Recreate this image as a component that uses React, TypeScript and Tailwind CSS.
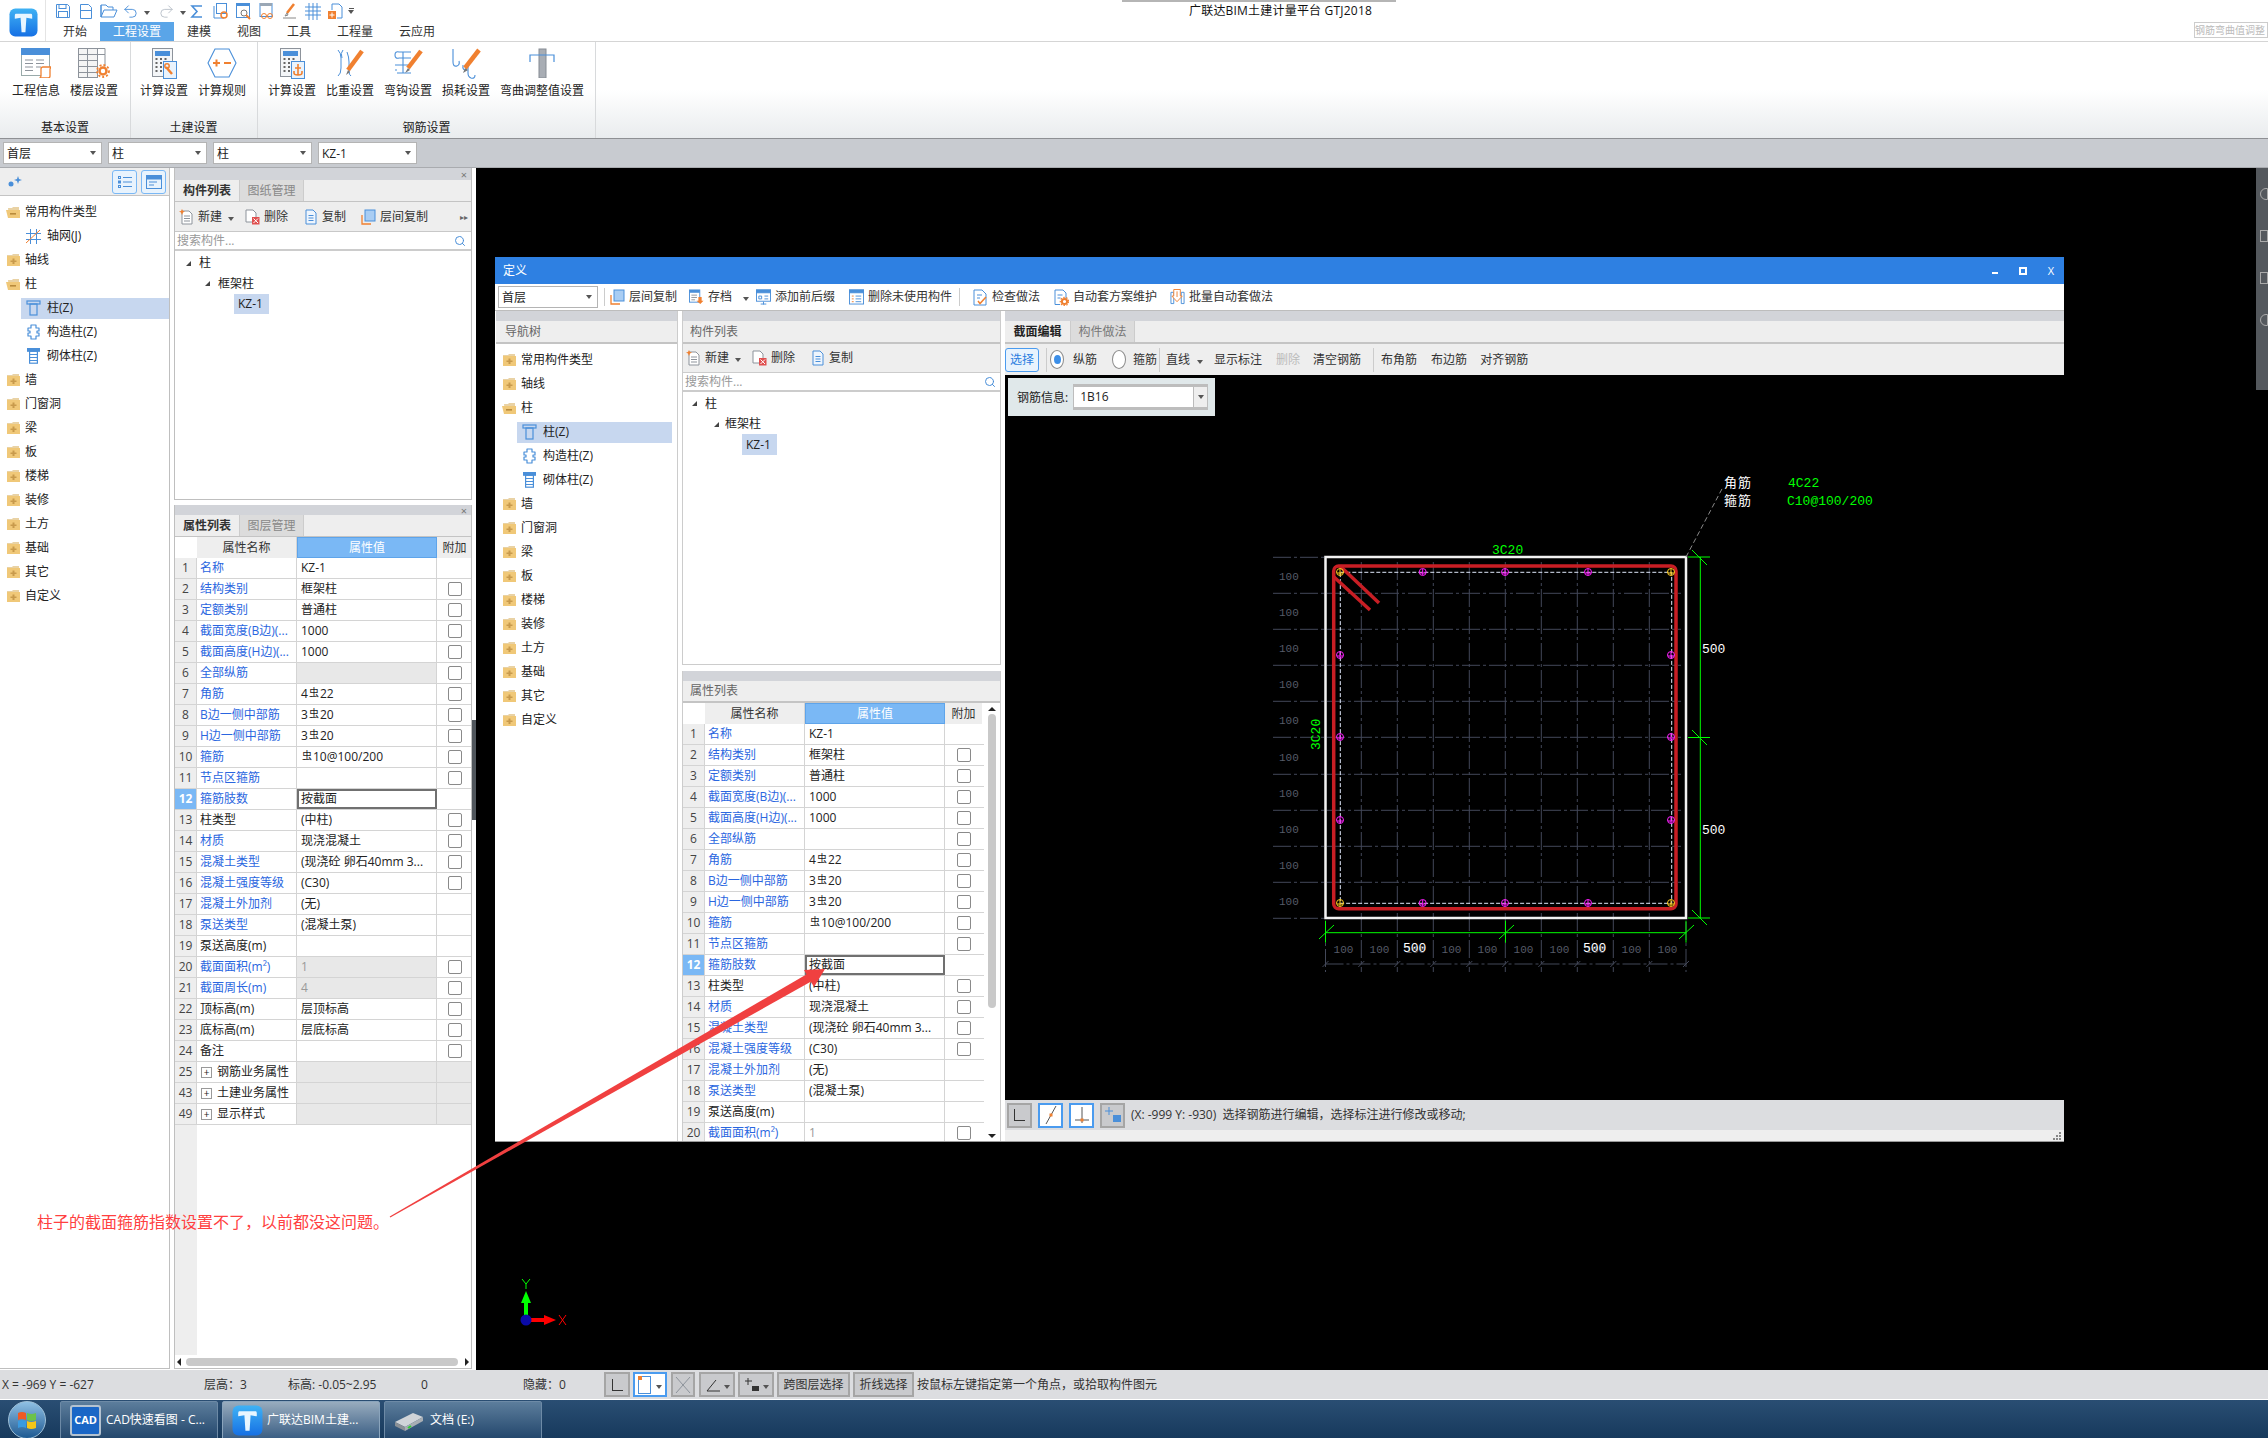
import React from "react";
import { Undo2, Redo2, Search } from "lucide-react";

const B = "#4a8fd9";
const O = "#f08030";
const G = "#8d939b";

const Caret = () => <span className="inline-block w-0 h-0 border-x-[3px] border-x-transparent border-t-[4px] border-t-[#555]" />;

const Logo = ({ s = 29 }: { s?: number }) => (
  <svg width={s} height={s} viewBox="0 0 30 30">
    <defs>
      <linearGradient id="lg" x1="0" y1="0" x2="0" y2="1">
        <stop offset="0" stopColor="#3fb2f4" />
        <stop offset="1" stopColor="#1670e4" />
      </linearGradient>
    </defs>
    <rect x="0.5" y="0.5" width="29" height="29" rx="6" fill="url(#lg)" />
    <path d="M7 6h16q1 0 1 2v3l-6-1-1 15-4 0-1-15-6 1V8q0-2 1-2z" fill="#e8f6ff" />
  </svg>
);

const Folder = ({ open }: { open?: boolean }) => (
  <svg width="15" height="14" viewBox="0 0 15 14">
    {open ? (
      <>
        <path d="M2 3h4l1-1h6v11H3z" fill="#e9d2a4" />
        <path d="M0 5h13l1 0v8H2z" fill="#f0c878" />
        <rect x="4" y="8" width="6" height="1.6" fill="#b98b3c" />
      </>
    ) : (
      <>
        <path d="M1 2h5l1-1h6v2H1z" fill="#e9d2a4" />
        <rect x="1" y="3" width="13" height="10" fill="#f0c878" />
        <path d="M6.5 5.5h2v2h2v1.5h-2v2h-2V9h-2V7.5h2z" fill="#c89a4c" />
      </>
    )}
  </svg>
);

const IcoGrid = () => (
  <svg width="15" height="15" viewBox="0 0 15 15" fill="none" stroke={B} strokeWidth="1">
    <path d="M4.5 0v15M10.5 0v15M0 4.5h15M0 10.5h15" />
    <path d="M0 14L14 1" stroke={O} />
  </svg>
);
const IcoCol = () => (
  <svg width="15" height="16" viewBox="0 0 15 16" fill="none" stroke={B} strokeWidth="1.2">
    <rect x="1" y="1" width="13" height="3" />
    <rect x="4" y="4" width="7" height="11" />
  </svg>
);
const IcoGz = () => (
  <svg width="13" height="16" viewBox="0 0 13 16" fill="none" stroke={B} strokeWidth="1.2">
    <path d="M4 1h5v3h3v3h-2v2h2v3H9v3H4v-3H1V9h2V7H1V4h3z" strokeLinejoin="round" />
  </svg>
);
const IcoQt = () => (
  <svg width="13" height="16" viewBox="0 0 13 16" fill="none" stroke={B} strokeWidth="1.2">
    <rect x="0.6" y="0.6" width="11.8" height="2.6" fill={B} />
    <rect x="2.6" y="3.2" width="7.8" height="12" />
    <path d="M2.6 6.5h7.8M2.6 9.5h7.8M2.6 12.5h7.8" />
  </svg>
);

type NavItem = { t: string; kind: "open" | "closed" | "grid" | "col" | "gz" | "qt"; sel?: boolean };
const mainNav: NavItem[] = [
  { t: "常用构件类型", kind: "open" },
  { t: "轴网(J)", kind: "grid" },
  { t: "轴线", kind: "closed" },
  { t: "柱", kind: "open" },
  { t: "柱(Z)", kind: "col", sel: true },
  { t: "构造柱(Z)", kind: "gz" },
  { t: "砌体柱(Z)", kind: "qt" },
  ...["墙", "门窗洞", "梁", "板", "楼梯", "装修", "土方", "基础", "其它", "自定义"].map((t) => ({ t, kind: "closed" as const })),
];
const dlgNav: NavItem[] = [{ t: "常用构件类型", kind: "closed" }, ...mainNav.slice(2)];

const NavTree = ({ items, dlg }: { items: NavItem[]; dlg?: boolean }) => (
  <div className="flex flex-col pt-[4px]">
    {items.map((it) => {
      const folder = it.kind === "open" || it.kind === "closed";
      return (
        <div key={it.t} className={folder ? "h-[24px] flex items-center pl-[6px]" : dlg ? "h-[24px] flex items-center pl-[21px] pr-[5px]" : "h-[24px] flex items-center pl-[21px]"}>
          {folder ? (
            <>
              <Folder open={it.kind === "open"} />
              <span className="ml-[4px] text-[#222]">{it.t}</span>
            </>
          ) : (
            <div className={it.sel ? "flex-1 h-[21px] flex items-center pl-[4px] bg-[#c7d7ef]" : "flex-1 h-[21px] flex items-center pl-[4px]"}>
              <span className="w-[16px] h-[16px] flex items-center justify-center">
                {it.kind === "grid" && <IcoGrid />}
                {it.kind === "col" && <IcoCol />}
                {it.kind === "gz" && <IcoGz />}
                {it.kind === "qt" && <IcoQt />}
              </span>
              <span className="ml-[6px] text-[#222]">{it.t}</span>
            </div>
          )}
        </div>
      );
    })}
  </div>
);

const Combo = ({ t, w }: { t: string; w: string }) => (
  <div className={`${w} h-[22px] bg-white border border-[#b4b4b4] flex items-center justify-between pl-[3px] pr-[5px] text-[#222]`}>
    <span className="pt-[1px]">{t}</span>
    <Caret />
  </div>
);

const IcoNew = () => (
  <svg width="15" height="16" viewBox="0 0 15 16" fill="none">
    <path d="M3 2h7l3 3v10H3z" fill="#fff" stroke={G} />
    <path d="M5 7h6M5 9.500h6M5 12h6" stroke={G} />
    <path d="M3 0l1 2 2 .5-2 1L3 6 2 3.500 0 2.500 2 2z" fill={O} />
  </svg>
);
const IcoDel = () => (
  <svg width="15" height="16" viewBox="0 0 15 16" fill="none">
    <path d="M1 1h7l3 3v9H1z" fill="#fff" stroke={G} />
    <rect x="7" y="8" width="7.500" height="7.500" fill="#e05050" />
    <path d="M8.500 9.500l4.500 4.500M13 9.500l-4.500 4.500" stroke="#fff" />
  </svg>
);
const IcoCopy = () => (
  <svg width="14" height="16" viewBox="0 0 14 16" fill="none" stroke={B}>
    <path d="M2 1h7l3 3v11H2z" fill="#eef5fd" />
    <path d="M4.500 6.500h5M4.500 9h5M4.500 11.500h5" />
  </svg>
);
const IcoLayer = () => (
  <svg width="15" height="16" viewBox="0 0 15 16" fill="none">
    <path d="M1 6v9h9" stroke={O} strokeWidth="1.300" />
    <rect x="4" y="1" width="10" height="11" fill="#a9cdf3" stroke={B} />
  </svg>
);
const IcoStore = () => (
  <svg width="16" height="16" viewBox="0 0 16 16" fill="none">
    <rect x="0.500" y="0.500" width="11" height="13" fill="#fff" stroke={B} />
    <rect x="0.500" y="0.500" width="11" height="3" fill={B} />
    <path d="M2.500 6h6M2.500 8.500h6M2.500 11h4" stroke={G} />
    <path d="M10 8v4H8l4 3.500 3.500-3.500h-2V8z" fill={O} />
  </svg>
);
const IcoPrefix = () => (
  <svg width="16" height="16" viewBox="0 0 16 16" fill="none" stroke={B}>
    <rect x="0.500" y="0.500" width="15" height="12" />
    <rect x="0.500" y="0.500" width="15" height="3" fill={B} />
    <path d="M3 7h3v3H3zM9 7h4M9 10h4M8 13v3M5 15.500h6" />
  </svg>
);
const IcoUnused = () => (
  <svg width="16" height="16" viewBox="0 0 16 16" fill="none" stroke={B}>
    <rect x="0.500" y="0.500" width="15" height="15" />
    <rect x="0.500" y="0.500" width="15" height="3" fill={B} />
    <path d="M3 7h2M3 10h2M3 13h2" stroke={O} />
    <path d="M7 7h6M7 10h6M7 13h6" />
  </svg>
);
const IcoCheck = () => (
  <svg width="15" height="17" viewBox="0 0 15 17" fill="none">
    <path d="M1 1h8l4 4v11H1z" stroke={B} fill="#fff" />
    <path d="M4 6h5M4 9h3" stroke={B} />
    <path d="M5 12l2 2.500L13 8" stroke={O} strokeWidth="1.500" />
  </svg>
);
const IcoAuto = () => (
  <svg width="15" height="17" viewBox="0 0 15 17" fill="none">
    <path d="M1 1h8l3 3v7M6 15.500H1V1" stroke={B} fill="#fff" />
    <path d="M3.500 6h5M3.500 9h3" stroke={B} />
    <circle cx="10.500" cy="12.500" r="2.600" stroke={O} strokeWidth="2" />
    <circle cx="10.500" cy="12.500" r="4.200" stroke={O} strokeDasharray="1.500 1.500" strokeWidth="1.200" />
  </svg>
);
const IcoBatch = () => (
  <svg width="16" height="18" viewBox="0 0 16 18" fill="none">
    <path d="M1 4h3v12H1zM12 4h3v12h-3z" stroke={B} />
    <path d="M4 1h7v7h2l-5.500 6L2 8h2z" fill="#fff" stroke={O} />
    <path d="M7.500 3v6" stroke={O} />
  </svg>
);

const ToolText = ({ icon, t, cls, sp }: { icon: React.ReactNode; t: string; cls: string; sp?: string }) => (
  <div className={`flex items-center ${cls}`}>
    <span className={sp || "w-[15px] flex justify-center"}>{icon}</span>
    <span className="ml-[4px] text-[#333]">{t}</span>
  </div>
);

const Val = ({ v }: { v: string }) => {
  const parts = v.split("虫");
  if (parts.length === 1) return <span>{v}</span>;
  return (
    <span>
      {parts[0]}
      <span className="inline-block text-[10px] leading-[10px] -translate-y-[2px] mx-[1px]">虫</span>
      {parts[1]}
    </span>
  );
};

type R = { n: number; name: string; val: string; blue?: boolean; noCk?: boolean; gray?: boolean; dim?: boolean; exp?: boolean };
const rows: R[] = [
  { n: 1, name: "名称", val: "KZ-1", blue: true, noCk: true },
  { n: 2, name: "结构类别", val: "框架柱", blue: true },
  { n: 3, name: "定额类别", val: "普通柱", blue: true },
  { n: 4, name: "截面宽度(B边)(...", val: "1000", blue: true },
  { n: 5, name: "截面高度(H边)(...", val: "1000", blue: true },
  { n: 6, name: "全部纵筋", val: "", blue: true, gray: true },
  { n: 7, name: "角筋", val: "4虫22", blue: true },
  { n: 8, name: "B边一侧中部筋", val: "3虫20", blue: true },
  { n: 9, name: "H边一侧中部筋", val: "3虫20", blue: true },
  { n: 10, name: "箍筋", val: "虫10@100/200", blue: true },
  { n: 11, name: "节点区箍筋", val: "", blue: true },
  { n: 12, name: "箍筋肢数", val: "按截面", blue: true, noCk: true },
  { n: 13, name: "柱类型", val: "(中柱)" },
  { n: 14, name: "材质", val: "现浇混凝土", blue: true },
  { n: 15, name: "混凝土类型", val: "(现浇砼 卵石40mm 3...", blue: true },
  { n: 16, name: "混凝土强度等级", val: "(C30)", blue: true },
  { n: 17, name: "混凝土外加剂", val: "(无)", blue: true, noCk: true },
  { n: 18, name: "泵送类型", val: "(混凝土泵)", blue: true, noCk: true },
  { n: 19, name: "泵送高度(m)", val: "", noCk: true },
  { n: 20, name: "截面面积(m²)", val: "1", blue: true, gray: true, dim: true },
  { n: 21, name: "截面周长(m)", val: "4", blue: true, gray: true, dim: true },
  { n: 22, name: "顶标高(m)", val: "层顶标高" },
  { n: 23, name: "底标高(m)", val: "层底标高" },
  { n: 24, name: "备注", val: "" },
  { n: 25, name: "钢筋业务属性", val: "", noCk: true, gray: true, exp: true },
  { n: 43, name: "土建业务属性", val: "", noCk: true, gray: true, exp: true },
  { n: 49, name: "显示样式", val: "", noCk: true, gray: true, exp: true },
];

const PropTable = ({ dlg }: { dlg?: boolean }) => {
  const addW = dlg ? "w-[37px]" : "w-[34px] pl-[1px]";
  const data = dlg ? rows.slice(0, 20) : rows;
  return (
    <div className="flex flex-col">
      <div className="h-[21px] flex items-stretch">
        <div className="w-[22px] bg-white" />
        <div className="w-[100px] bg-[#eeeeee] flex items-center justify-center text-[#333] border-r border-[#d4d4d4]">属性名称</div>
        <div className="w-[140px] bg-[#7ab8f5] flex items-center justify-center text-white border border-[#5ea4ea]">属性值</div>
        <div className={`${addW} bg-[#eeeeee] flex items-center justify-center text-[#333]`}>附加</div>
      </div>
      {data.map((r) => (
        <div key={r.n} className="h-[21px] flex items-stretch border-b border-[#d4d4d4] bg-white">
          <div className={r.n === 12 ? "w-[22px] bg-[#7ab8f5] text-white font-bold flex items-center justify-center border-r border-[#d4d4d4]" : "w-[22px] bg-[#eeeeee] text-[#444] flex items-center justify-center border-r border-[#d4d4d4]"}>
            {r.n}
          </div>
          <div className={r.blue ? "w-[100px] pl-[3px] flex items-center text-[#2a66e0] border-r border-[#d4d4d4] whitespace-nowrap overflow-hidden" : "w-[100px] pl-[3px] flex items-center text-[#222] border-r border-[#d4d4d4] whitespace-nowrap overflow-hidden"}>
            {r.exp && <span className="w-[11px] h-[11px] border border-[#999] flex items-center justify-center text-[10px] leading-none mr-[5px] ml-[1px] bg-white">+</span>}
            {r.name}
          </div>
          <div
            className={
              r.n === 12
                ? "w-[140px] pl-[2px] flex items-center border-2 border-[#707070] text-[#222] whitespace-nowrap"
                : r.gray && !dlg
                ? "w-[140px] pl-[4px] flex items-center bg-[#e8e8e8] text-[#999] border-r border-[#d4d4d4] whitespace-nowrap"
                : r.dim
                ? "w-[140px] pl-[4px] flex items-center text-[#999] border-r border-[#d4d4d4] whitespace-nowrap"
                : "w-[140px] pl-[4px] flex items-center text-[#222] border-r border-[#d4d4d4] whitespace-nowrap"
            }
          >
            <Val v={r.val} />
          </div>
          <div className={r.exp ? `${addW} flex items-center justify-center bg-[#e8e8e8]` : `${addW} flex items-center justify-center`}>
            {!r.noCk && <span className="w-[14px] h-[14px] border border-[#8a8a8a] rounded-[2px] bg-white" />}
          </div>
        </div>
      ))}
    </div>
  );
};

const Check = ({ on }: { on?: boolean }) => (
  <span className="w-[14px] h-[19px] rounded-[50%] border border-[#8a8a8a] flex items-center justify-center bg-white">
    {on && <span className="w-[7px] h-[9px] rounded-[50%] bg-[#3d8fe8]" />}
  </span>
);

/* ---------- CAD drawing ---------- */
const vx = [1360.3, 1396.3, 1432.3, 1468.3, 1504.3, 1540.3, 1576.3, 1612.3, 1648.3];
const hy = [593.3, 629.3, 665.3, 701.3, 737.3, 774.3, 810.3, 846.3, 882.3];
const labY = [575.7, 611.7, 647.7, 683.7, 719.7, 756.7, 792.7, 828.7, 864.7, 900.7];
const labX = [1342.6, 1378.6, 1414.6, 1450.6, 1486.6, 1522.6, 1558.6, 1594.6, 1630.6, 1666.6];

const Bar = ({ x, y, c }: { x: number; y: number; c: string }) => (
  <g stroke={c} strokeWidth="1" fill="none">
    <circle cx={x} cy={y} r="3.500" />
    <path d={`M${x} ${y - 3}v6M${x - 3} ${y + 1}h6`} />
  </g>
);

const Drawing = () => (
  <svg className="absolute inset-0" width="1060" height="725" viewBox="1004 375 1060 725">
    <g stroke="#434859" strokeWidth="1" strokeDasharray="18 3 3 3" fill="none">
      {vx.map((x) => (
        <path key={x} d={`M${x} 562V972`} />
      ))}
      {hy.map((y) => (
        <path key={y} d={`M1272 ${y}H1680`} />
      ))}
      <path d="M1272 557.300H1324M1272 918.300H1324" />
      <path d="M1324.500 922V972M1685 922V972M1324.500 964H1685" />
    </g>
    <g stroke="#434859" strokeWidth="1">
      {[1324.5, ...vx, 1685].map((x) => (
        <path key={x} d={`M${x - 3} 967l6-6`} />
      ))}
    </g>
    <g fontFamily="Liberation Mono, monospace" fontSize="11" fill="#565b68">
      {labY.map((y) => (
        <text key={y} x="1278" y={y + 4}>100</text>
      ))}
      {labX.map((x) => (
        <text key={x} x={x - 10} y="953">100</text>
      ))}
    </g>
    <rect x="1324.500" y="557" width="360.500" height="361" fill="none" stroke="#f2f2f2" strokeWidth="2.500" />
    <rect x="1339.300" y="572.300" width="331.400" height="331" fill="none" stroke="#dfe8fa" strokeWidth="1" strokeDasharray="4 2" />
    <rect x="1332.700" y="566" width="342.300" height="342.700" rx="5" fill="none" stroke="#c81e24" strokeWidth="3.500" />
    <path d="M1339 566L1378 603M1333 577L1369 610" stroke="#c81e24" strokeWidth="3.500" fill="none" />
    {[1421.7, 1504, 1587].map((x) => (
      <React.Fragment key={x}>
        <Bar x={x} y={572} c="#ff20ff" />
        <Bar x={x} y={903} c="#ff20ff" />
      </React.Fragment>
    ))}
    {[655, 737, 820].map((y) => (
      <React.Fragment key={y}>
        <Bar x={1339} y={y} c="#ff20ff" />
        <Bar x={1670} y={y} c="#ff20ff" />
      </React.Fragment>
    ))}
    <Bar x={1339} y={572} c="#ffcc20" />
    <Bar x={1670} y={572} c="#ffcc20" />
    <Bar x={1339} y={903} c="#ffcc20" />
    <Bar x={1670} y={903} c="#ffcc20" />
    <g stroke="#00ff00" strokeWidth="1" fill="none">
      <path d="M1324.500 932.700H1685M1324.500 920.700V942.700M1504.500 920.700V942.700M1685 920.700V942.700" />
      <path d="M1318 939l15-14M1498 939l15-14M1678 939l15-14" />
      <path d="M1699.300 557V918M1687 557H1709M1687 737.500H1709M1687 918H1709" />
      <path d="M1691 550l15 15M1691 730l15 15M1691 910l15 15" />
    </g>
    <path d="M1685 557L1722 487" stroke="#8a8a8a" strokeDasharray="5 3" fill="none" />
    <g fontFamily="Liberation Mono, monospace" fontSize="13" fill="#ffffff">
      <text x="1402" y="952">500</text>
      <text x="1582" y="952">500</text>
      <text x="1701" y="653">500</text>
      <text x="1701" y="834">500</text>
    </g>
    <g fontFamily="Liberation Mono, monospace" fontSize="13" fill="#00ff00">
      <text x="1491" y="554">3C20</text>
      <text transform="translate(1319 750) rotate(-90)">3C20</text>
      <text x="1787" y="487">4C22</text>
      <text x="1786" y="505">C10@100/200</text>
    </g>
    <g fontFamily="Noto Sans CJK SC, sans-serif" fontSize="13" fill="#ffffff" letterSpacing="1">
      <text x="1723" y="487">角筋</text>
      <text x="1723" y="505">箍筋</text>
    </g>
  </svg>
);

const StatBtn = ({ children, w, on }: { children: React.ReactNode; w: string; on?: boolean }) => (
  <div className={on ? `${w} h-[25px] bg-white border-2 border-[#4a9bef] flex items-center justify-center` : `${w} h-[25px] bg-[#c9cacd] border-2 border-[#a5a5a5] flex items-center justify-center`}>
    {children}
  </div>
);

const Dialog = () => (
  <div className="absolute left-[495px] top-[257px] w-[1569px] h-[885px] flex flex-col bg-white border-b border-[#999]">
    <div className="h-[27px] bg-[#2e80e2] flex items-center pl-[8px] text-white">
      <span>定义</span>
      <div className="ml-auto flex items-center">
        <span className="w-[6px] h-[2px] mt-[5px] bg-white mr-[21px]" />
        <span className="w-[8px] h-[8px] border-2 border-white mr-[21px]" />
        <span className="mr-[10px] text-[11px] leading-none">X</span>
      </div>
    </div>
    <div className="h-[27px] bg-white border-b border-[#bdbdbd] flex items-center pl-[3px]">
      <Combo t="首层" w="w-[100px]" />
      <span className="w-px h-[18px] bg-[#ccc] ml-[6px]" />
      <ToolText cls="ml-[5px] w-[72px]" icon={<IcoLayer />} t="层间复制" />
      <ToolText cls="ml-[7px] w-[53px]" icon={<IcoStore />} t="存档" />
      <span className="ml-[1px]"><Caret /></span>
      <ToolText cls="ml-[7px] w-[85px]" icon={<IcoPrefix />} t="添加前后缀" />
      <ToolText cls="ml-[8px] w-[110px]" icon={<IcoUnused />} t="删除未使用构件" />
      <span className="w-px h-[18px] bg-[#ccc] ml-[0px]" />
      <ToolText cls="ml-[13px] w-[73px]" icon={<IcoCheck />} t="检查做法" />
      <ToolText cls="ml-[8px] w-[108px]" icon={<IcoAuto />} t="自动套方案维护" />
      <ToolText cls="ml-[8px] w-[110px]" icon={<IcoBatch />} t="批量自动套做法" />
    </div>
    <div className="flex-1 flex min-h-0">
      {/* nav */}
      <div className="w-[182px] ml-[1px] border-r border-[#ccc] flex flex-col">
        <div className="h-[10px] bg-[#d2d4d9]" />
        <div className="h-[23px] bg-[#eeeeee] border-b-2 border-[#c4c4c4] flex items-center pl-[9px] text-[#666]">导航树</div>
        <NavTree items={dlgNav} dlg />
      </div>
      <div className="w-[4px]" />
      {/* list column */}
      <div className="w-[319px] flex flex-col">
        <div className="h-[354px] flex flex-col border-x border-[#ccc] border-b">
          <div className="h-[10px] bg-[#d2d4d9]" />
          <div className="h-[23px] bg-[#eeeeee] border-b-2 border-[#c4c4c4] flex items-center pl-[7px] text-[#666]">构件列表</div>
          <div className="h-[28px] bg-[#eeeeee] flex items-center pl-[3px]">
            <ToolText cls="" icon={<IcoNew />} t="新建" />
            <span className="ml-[6px]"><Caret /></span>
            <ToolText cls="ml-[11px]" icon={<IcoDel />} t="删除" />
            <ToolText cls="ml-[15px]" icon={<IcoCopy />} t="复制" />
          </div>
          <div className="h-[20px] flex items-center pl-[2px] pr-[4px] bg-white border-b-2 border-t border-[#ccc] text-[#999]">
            <span>搜索构件...</span>
            <Search className="ml-auto" size={12} color={B} />
          </div>
          <div className="flex flex-col pt-[1px] text-[#222]">
            <div className="h-[21px] flex items-center pl-[9px]"><span className="w-0 h-0 border-b-[5px] border-l-[5px] border-b-[#444] border-l-transparent mr-[8px]" />柱</div>
            <div className="h-[20px] flex items-center pl-[31px]"><span className="w-0 h-0 border-b-[5px] border-l-[5px] border-b-[#444] border-l-transparent mr-[6px]" />框架柱</div>
            <div className="h-[21px] flex items-center pl-[59px]"><span className="h-[21px] w-[35px] bg-[#c7d7ef] flex items-center pl-[4px]">KZ-1</span></div>
          </div>
        </div>
        <div className="h-[6px]" />
        <div className="flex-1 flex flex-col min-h-0 border-x border-[#ccc] overflow-hidden">
          <div className="h-[10px] shrink-0 bg-[#d2d4d9]" />
          <div className="h-[22px] shrink-0 bg-[#eeeeee] border-b-2 border-[#c4c4c4] flex items-center pl-[7px] text-[#666]">属性列表</div>
          <div className="flex flex-1 min-h-0">
            <div className="w-[301px] overflow-hidden"><PropTable dlg /></div>
            <div className="w-[16px] flex flex-col items-center bg-white">
              <span className="mt-[4px] w-0 h-0 border-x-[4px] border-x-transparent border-b-[4px] border-b-[#222]" />
              <span className="mt-[3px] w-[8px] h-[294px] rounded-[4px] bg-[#c9c9c9]" />
              <span className="mt-auto mb-[3px] w-0 h-0 border-x-[4px] border-x-transparent border-t-[4px] border-t-[#222]" />
            </div>
          </div>
        </div>
      </div>
      <div className="w-[4px]" />
      {/* right */}
      <div className="w-[1059px] flex flex-col">
        <div className="h-[10px] bg-[#d2d4d9]" />
        <div className="h-[23px] bg-[#eeeeee] border-b-2 border-[#c4c4c4] flex items-stretch">
          <div className="w-[65px] flex items-center justify-center text-[#222] font-semibold">截面编辑</div>
          <div className="w-[65px] bg-[#dcdcdc] flex items-center justify-center text-[#777] border-x border-[#ccc]">构件做法</div>
        </div>
        <div className="h-[31px] bg-[#eeeeee] flex items-center text-[#333]">
          <div className="w-[34px] h-[24px] border border-[#4a9bef] rounded-[3px] bg-[#e8f3fd] text-[#2a7de0] flex items-center justify-center">选择</div>
          <span className="ml-[7px] w-px h-[24px] bg-[#ccc]" />
          <span className="ml-[3px]"><Check on /></span>
          <span className="ml-[9px]">纵筋</span>
          <span className="ml-[15px]"><Check /></span>
          <span className="ml-[7px]">箍筋</span>
          <span className="ml-[2px] w-px h-[24px] bg-[#ccc]" />
          <span className="ml-[6px]">直线</span>
          <span className="ml-[7px]"><Caret /></span>
          <span className="ml-[11px]">显示标注</span>
          <span className="ml-[14px] text-[#bbb]">删除</span>
          <span className="ml-[13px]">清空钢筋</span>
          <span className="ml-[12px] w-px h-[24px] bg-[#ccc]" />
          <span className="ml-[7px]">布角筋</span>
          <span className="ml-[14px]">布边筋</span>
          <span className="ml-[13px]">对齐钢筋</span>
        </div>
        <div className="flex-1 bg-black relative min-h-0">
          <Drawing />
          <div className="absolute left-[3px] top-[3px] w-[207px] h-[38px] bg-[#e0e8ea] flex items-center pl-[9px]">
            <span className="text-[#222] pt-[1px]">钢筋信息:</span>
            <div className="ml-[5px] w-[135px] h-[26px] bg-white border-y-[3px] border-x border-[#bdbdbd] flex items-center pl-[6px] text-[#222]">
              <span>1B16</span>
              <span className="ml-auto h-full w-[14px] bg-[#eee] border-l border-[#bbb] flex items-center justify-center"><Caret /></span>
            </div>
          </div>
        </div>
        <div className="h-[30px] bg-[#dcdde0] flex items-center pl-[2px] gap-[6px]">
          <StatBtn w="w-[25px]"><span className="w-[11px] h-[12px] border-l border-b border-[#333]" /></StatBtn>
          <StatBtn w="w-[25px]" on>
            <svg width="16" height="20" viewBox="0 0 16 20"><path d="M3 19L13 1" stroke="#555" /><rect x="6.500" y="8.500" width="3" height="3" fill={O} /></svg>
          </StatBtn>
          <StatBtn w="w-[25px]" on>
            <svg width="16" height="20" viewBox="0 0 16 20"><path d="M8 2v16M1 15h14" stroke="#555" /><rect x="6.500" y="13.500" width="3" height="3" fill={O} /></svg>
          </StatBtn>
          <StatBtn w="w-[25px]">
            <svg width="18" height="18" viewBox="0 0 18 18"><path d="M5 1v8M1 5h8" stroke={B} /><rect x="9" y="9" width="8" height="7" fill={B} /></svg>
          </StatBtn>
          <span className="text-[#333]">(X: -999 Y: -930)&nbsp;&nbsp;选择钢筋进行编辑，选择标注进行修改或移动;</span>
        </div>
        <div className="h-[11px] bg-[#eeeeee] flex justify-end items-end pr-[3px] pb-[1px]">
          <svg width="8" height="8" viewBox="0 0 8 8" fill="#888"><rect x="6" y="0" width="2" height="2" /><rect x="6" y="3" width="2" height="2" /><rect x="3" y="3" width="2" height="2" /><rect x="6" y="6" width="2" height="2" /><rect x="3" y="6" width="2" height="2" /><rect x="0" y="6" width="2" height="2" /></svg>
        </div>
      </div>
    </div>
  </div>
);

/* ---------- Ribbon icons ---------- */
const RI1 = () => (
  <svg width="30" height="30" viewBox="0 0 30 30" fill="none">
    <rect x="0.500" y="0.500" width="28" height="27" fill="#fff" stroke="#9aa" />
    <rect x="0" y="0" width="29" height="7" fill={B} />
    <path d="M4 12h8M4 15.500h8M4 19h8M4 22.500h8M15 12h8M15 15.500h8M15 19h5" stroke={G} />
    <path d="M22 19h8l-1 2v7q0 2-2 2h-8l1-2v-7q0-2 2-2z" fill="#fff" stroke={O} strokeWidth="1.300" />
  </svg>
);
const RI2 = () => (
  <svg width="32" height="30" viewBox="0 0 32 30" fill="none" stroke={G}>
    <rect x="0.500" y="0.500" width="19" height="29" fill="#f4f4f4" />
    <path d="M0 6.500h27v12M0 12.500h20M0 18.500h20M0 24.500h20M9.500 0v30" />
    <path d="M20 .5h7v6" />
    <circle cx="25" cy="23" r="3.500" stroke={O} strokeWidth="2.500" />
    <circle cx="25" cy="23" r="6" stroke={O} strokeWidth="1.800" strokeDasharray="2 2" />
  </svg>
);
const Calc = () => (
  <>
    <rect x="0.500" y="0.500" width="20" height="28" fill="#f4f6f8" stroke={G} />
    <rect x="3" y="3" width="15" height="5" fill={B} />
    <path d="M3.500 11h2M8 11h2M12.500 11h2M3.500 15h2M8 15h2M3.500 19h2M8 19h2M3.500 23h2M8 23h2" stroke="#666" strokeWidth="2" />
  </>
);
const RI3 = () => (
  <svg width="25" height="32" viewBox="0 0 25 32" fill="none">
    <Calc />
    <rect x="11.500" y="13.500" width="13" height="17" fill="#eaf3fc" stroke={B} />
    <path d="M14 19l6 7" stroke={O} strokeWidth="2.500" />
    <circle cx="15" cy="18" r="2.200" stroke={O} strokeWidth="1.500" />
  </svg>
);
const RI4 = () => (
  <svg width="30" height="30" viewBox="0 0 30 30" fill="none">
    <path d="M8 1h14l7 14-7 14H8L1 15z" stroke={B} strokeWidth="1.100" />
    <path d="M6 15h7M9.500 11.500v7M17 15h7" stroke={O} strokeWidth="2" />
  </svg>
);
const RI5 = () => (
  <svg width="25" height="32" viewBox="0 0 25 32" fill="none">
    <Calc />
    <rect x="11.500" y="13.500" width="13" height="17" fill="#eaf3fc" stroke={B} />
    <path d="M18 16v11M15 20h6M14 23v2q0 2 4 2t4-2v-2" stroke={O} strokeWidth="1.600" />
  </svg>
);
const Pencil = ({ d }: { d: string }) => <path d={d} stroke={O} strokeWidth="4.500" strokeLinecap="butt" />;
const RI6 = () => (
  <svg width="30" height="30" viewBox="0 0 30 30" fill="none">
    <path d="M3 2q3 3 3 8v10q0 6-3 8M8 2q-3 3-1 8M12 4q2 5 2 10v9q0 4 2 5" stroke={B} />
    <Pencil d="M27 3L13 22" />
    <path d="M13 22l-2 5 4-3z" fill="#777" />
  </svg>
);
const RI7 = () => (
  <svg width="30" height="30" viewBox="0 0 30 30" fill="none">
    <path d="M2 7q0-4 4-3h12M2 7q0 4 4 3h12M10 4v21M4 25h14M2 17h14M2 22h2" stroke={B} strokeWidth="1.100" />
    <Pencil d="M28 3L15 20" />
    <path d="M15 20l-3 5 5-3z" fill="#777" />
  </svg>
);
const RI8 = () => (
  <svg width="30" height="32" viewBox="0 0 30 32" fill="none">
    <path d="M2 1v13q0 5 4 4 3-1 2-5M12 17q-1 6 4 5M17 16v9q0 4 3 5 4 1 4-3" stroke={B} strokeWidth="1.100" />
    <Pencil d="M28 2L14 20" />
    <path d="M14 20l-2 5 5-3z" fill="#777" />
  </svg>
);
const RI9 = () => (
  <svg width="26" height="30" viewBox="0 0 26 30" fill="none">
    <rect x="10" y="1" width="7" height="29" fill="#a8adb4" stroke="#868c94" />
    <path d="M1 14V7h24v7" stroke={B} strokeWidth="1.200" />
  </svg>
);

const RBtn = ({ icon, t, w = "w-[48px]" }: { icon: React.ReactNode; t: string; w?: string }) => (
  <div className={`${w} flex flex-col items-center`}>
    <div className="h-[30px] flex items-start justify-center">{icon}</div>
    <span className="mt-[5px] leading-[16px] text-[#222] whitespace-nowrap">{t}</span>
  </div>
);

const RGroup = ({ w, pl, label, children }: { w: string; pl: string; label: string; children: React.ReactNode }) => (
  <div className={`${w} ${pl} h-full flex flex-col justify-between pt-[6px] pb-[2px] border-r border-[#d8dadc]`}>
    <div className="flex gap-[10px]">{children}</div>
    <div className="text-center leading-[16px] text-[#222]">{label}</div>
  </div>
);

const MiniNode = ({ c }: { c: React.ReactNode }) => <span className="flex items-center justify-center w-[23px] h-[17px]">{c}</span>;

const QuickIcon = ({ k }: { k: number }) => {
  if (k === 0)
    return (
      <svg width="16" height="16" viewBox="0 0 16 16" fill="none" stroke={B}>
        <path d="M1.500 1.500h11l2 2v11h-13z" />
        <rect x="4" y="1.500" width="7" height="4" />
        <rect x="3.500" y="8.500" width="9" height="6" />
      </svg>
    );
  if (k === 1)
    return (
      <svg width="16" height="17" viewBox="0 0 16 17" fill="none" stroke={B}>
        <path d="M2.500 1.500h8l3 3v11h-11z" />
        <path d="M2.500 7.500h11" />
      </svg>
    );
  if (k === 2)
    return (
      <svg width="18" height="16" viewBox="0 0 18 16" fill="none" stroke={B}>
        <path d="M1 2h5l2 2h5v3M1 2v12l3-7h13l-3 7H1z" />
      </svg>
    );
  if (k === 4)
    return (
      <svg width="15" height="15" viewBox="0 0 15 15" fill="none" stroke={B} strokeWidth="1.600">
        <path d="M12 2H2l5 5.500L2 13h10" />
      </svg>
    );
  if (k === 5)
    return (
      <svg width="16" height="17" viewBox="0 0 16 17" fill="none">
        <rect x="3.500" y="0.500" width="10" height="10" fill="#fff" stroke={B} />
        <path d="M1 3v12h10" stroke={B} />
        <circle cx="11" cy="12" r="3" stroke={O} strokeWidth="1.500" />
      </svg>
    );
  if (k === 6)
    return (
      <svg width="16" height="17" viewBox="0 0 16 17" fill="none">
        <rect x="0.500" y="0.500" width="13" height="14" stroke={B} />
        <rect x="0" y="0" width="14" height="3" fill={B} />
        <circle cx="8" cy="10" r="3" stroke="#777" />
        <path d="M10 12l4 4" stroke={O} strokeWidth="2" />
      </svg>
    );
  if (k === 7)
    return (
      <svg width="16" height="17" viewBox="0 0 16 17" fill="none">
        <rect x="1" y="0.500" width="12" height="13" stroke={B} />
        <rect x="1" y="0" width="12" height="3" fill="#9aa7b5" />
        <circle cx="5" cy="13" r="2.500" stroke={O} />
        <circle cx="11" cy="13" r="2.500" stroke={O} />
      </svg>
    );
  if (k === 8)
    return (
      <svg width="15" height="16" viewBox="0 0 15 16" fill="none">
        <path d="M12 1L5 10" stroke={O} strokeWidth="2.500" />
        <path d="M5 10l-2 3 3-1zM1 15h13" stroke="#888" />
      </svg>
    );
  if (k === 9)
    return (
      <svg width="16" height="17" viewBox="0 0 16 17" fill="none" stroke={B}>
        <path d="M4 0v17M8 0v17M12 0v17M0 4h16M0 8h16M0 12h16" />
      </svg>
    );
  return (
    <svg width="15" height="17" viewBox="0 0 15 17" fill="none">
      <path d="M4 7V1h7l3 3v11H9" stroke={B} />
      <rect x="0" y="8" width="8" height="8" fill={O} />
      <path d="M4 9.500v5M1.500 12h5" stroke="#fff" />
    </svg>
  );
};

export default function App() {
  return (
    <div className="relative w-[2268px] h-[1438px] overflow-hidden flex flex-col bg-white text-[12px] leading-[16px] [font-family:'Open_Sans','Noto_Sans_CJK_SC',sans-serif]">
      {/* top */}
      <div className="h-[42px] shrink-0 flex border-b border-[#d5d5d5] bg-white">
        <div className="w-[46px] pt-[8px] pl-[9px] border-r border-[#e4e4e4]">
          <Logo />
        </div>
        <div className="flex-1 flex flex-col">
          <div className="h-[22px] flex items-center pl-[5px] text-[#222]">
            <MiniNode c={<QuickIcon k={0} />} />
            <MiniNode c={<QuickIcon k={1} />} />
            <MiniNode c={<QuickIcon k={2} />} />
            <span className="ml-[2px]"><Undo2 size={17} color={B} strokeWidth={1.3} /></span>
            <span className="ml-[5px]"><Caret /></span>
            <span className="ml-[8px]"><Redo2 size={17} color="#b8c0c8" strokeWidth={1.3} /></span>
            <span className="ml-[5px]"><Caret /></span>
            <MiniNode c={<QuickIcon k={4} />} />
            <MiniNode c={<QuickIcon k={5} />} />
            <MiniNode c={<QuickIcon k={6} />} />
            <MiniNode c={<QuickIcon k={7} />} />
            <MiniNode c={<QuickIcon k={8} />} />
            <MiniNode c={<QuickIcon k={9} />} />
            <MiniNode c={<QuickIcon k={10} />} />
            <span className="ml-[1px] flex flex-col items-center gap-[1px]"><span className="w-[5px] h-px bg-[#555]" /><Caret /></span>
            <span className="ml-[835px] text-[#111] tracking-[0.2px]">广联达BIM土建计量平台 GTJ2018</span>
          </div>
          <div className="h-[19px] flex items-stretch pl-[4px] text-[#333]">
            <div className="w-[50px] flex items-center justify-center">开始</div>
            <div className="w-[74px] flex items-center justify-center bg-[#5aa5e8] text-white">工程设置</div>
            <div className="w-[50px] flex items-center justify-center">建模</div>
            <div className="w-[50px] flex items-center justify-center">视图</div>
            <div className="w-[50px] flex items-center justify-center">工具</div>
            <div className="w-[62px] flex items-center justify-center">工程量</div>
            <div className="w-[62px] flex items-center justify-center">云应用</div>
            <div className="ml-auto w-[74px] h-[16px] self-start border border-[#ccc] bg-white text-[#bbb] text-[10px] leading-[14px] whitespace-nowrap">钢筋弯曲值调整</div>
          </div>
        </div>
      </div>
      {/* ribbon */}
      <div className="h-[97px] shrink-0 flex border-b border-[#8e9094] bg-gradient-to-b from-white via-white to-[#e9ecee]">
        <RGroup w="w-[131px]" pl="pl-[12px] pr-[12px]" label="基本设置">
          <RBtn icon={<RI1 />} t="工程信息" />
          <RBtn icon={<RI2 />} t="楼层设置" />
        </RGroup>
        <RGroup w="w-[127px]" pl="pl-[9px] pr-[10px]" label="土建设置">
          <RBtn icon={<RI3 />} t="计算设置" />
          <RBtn icon={<RI4 />} t="计算规则" />
        </RGroup>
        <RGroup w="w-[338px]" pl="pl-[10px] pr-[10px]" label="钢筋设置">
          <RBtn icon={<RI5 />} t="计算设置" />
          <RBtn icon={<RI6 />} t="比重设置" />
          <RBtn icon={<RI7 />} t="弯钩设置" />
          <RBtn icon={<RI8 />} t="损耗设置" />
          <RBtn icon={<RI9 />} t="弯曲调整值设置" w="w-[84px]" />
        </RGroup>
      </div>
      {/* combos */}
      <div className="h-[29px] shrink-0 bg-[#c8cbd0] flex items-center pl-[3px] gap-[6px] border-b border-[#a9abaf]">
        <Combo t="首层" w="w-[99px]" />
        <Combo t="柱" w="w-[99px]" />
        <Combo t="柱" w="w-[99px]" />
        <Combo t="KZ-1" w="w-[99px]" />
      </div>
      {/* main */}
      <div className="h-[1202px] shrink-0 flex bg-white">
        <div className="w-[170px] h-[1201px] border-r border-b border-[#bfbfbf] flex flex-col">
          <div className="h-[28px] bg-[#eeeeee] border-b border-[#c4c4c4] flex items-center pl-[8px] pr-[3px]">
            <svg width="14" height="12" viewBox="0 0 14 12" fill={B}><path d="M10 0l1 3 3 1-3 1-1 3-1-3-3-1 3-1z" /><circle cx="3" cy="8" r="2.500" /></svg>
            <div className="ml-auto w-[25px] h-[24px] border border-[#7ab8f5] rounded-[3px] bg-[#e8f3fd] flex items-center justify-center">
              <svg width="16" height="14" viewBox="0 0 16 14" fill="none" stroke={B}><rect x="1.500" y="1.500" width="2" height="2" /><rect x="1.500" y="6" width="2" height="2" /><rect x="1.500" y="10.500" width="2" height="2" /><path d="M6 2.500h9M6 7h9M6 11.500h9" /></svg>
            </div>
            <div className="ml-[4px] w-[25px] h-[24px] border border-[#7ab8f5] rounded-[3px] bg-[#e8f3fd] flex items-center justify-center">
              <svg width="16" height="14" viewBox="0 0 16 14" fill="none" stroke={B}><rect x="0.500" y="0.500" width="15" height="13" /><rect x="0.500" y="0.500" width="15" height="3.500" fill={B} /><path d="M3 7h8M3 10h5" /></svg>
            </div>
          </div>
          <NavTree items={mainNav} />
        </div>
        <div className="w-[4px]" />
        <div className="w-[298px] flex flex-col h-[1201px]">
          <div className="h-[332px] border-x border-b border-[#bfbfbf] flex flex-col">
            <div className="h-[12px] bg-[#d2d4d9] flex items-center justify-end pr-[4px]"><span className="text-[11px] leading-none text-[#777]">×</span></div>
            <div className="h-[22px] bg-[#eeeeee] border-b border-[#c4c4c4] flex items-stretch">
              <div className="w-[64px] flex items-center justify-center font-semibold text-[#333]">构件列表</div>
              <div className="w-[65px] bg-[#dcdcdc] border-x border-[#ccc] flex items-center justify-center text-[#888]">图纸管理</div>
            </div>
            <div className="h-[30px] bg-[#eeeeee] border-b border-[#c8c8c8] flex items-center pl-[4px]">
              <ToolText cls="" icon={<IcoNew />} t="新建" />
              <span className="ml-[6px]"><Caret /></span>
              <ToolText cls="ml-[11px]" icon={<IcoDel />} t="删除" />
              <ToolText cls="ml-[15px]" icon={<IcoCopy />} t="复制" />
              <ToolText cls="ml-[15px]" icon={<IcoLayer />} t="层间复制" />
              <span className="ml-auto mr-[3px] text-[8px] leading-none text-[#666]">▸▸</span>
            </div>
            <div className="h-[19px] flex items-center pl-[2px] pr-[5px] border-b-2 border-[#ccc] text-[#999]">
              <span>搜索构件...</span>
              <Search className="ml-auto" size={12} color={B} />
            </div>
            <div className="flex flex-col pt-[2px] text-[#222]">
              <div className="h-[20px] flex items-center pl-[11px]"><span className="w-0 h-0 border-b-[5px] border-l-[5px] border-b-[#444] border-l-transparent mr-[8px]" />柱</div>
              <div className="h-[21px] flex items-center pl-[30px]"><span className="w-0 h-0 border-b-[5px] border-l-[5px] border-b-[#444] border-l-transparent mr-[8px]" />框架柱</div>
              <div className="h-[20px] flex items-center pl-[59px]"><span className="h-[20px] w-[35px] bg-[#c7d7ef] flex items-center pl-[4px]">KZ-1</span></div>
            </div>
          </div>
          <div className="h-[5px]" />
          <div className="flex-1 min-h-0 border-x border-b border-[#bfbfbf] flex flex-col">
            <div className="h-[10px] shrink-0 bg-[#d2d4d9] flex items-center justify-end pr-[4px]"><span className="text-[11px] leading-none text-[#777]">×</span></div>
            <div className="h-[22px] shrink-0 bg-[#eeeeee] border-b border-[#c4c4c4] flex items-stretch">
              <div className="w-[64px] flex items-center justify-center font-semibold text-[#333]">属性列表</div>
              <div className="w-[65px] bg-[#dcdcdc] border-x border-[#ccc] flex items-center justify-center text-[#888]">图层管理</div>
            </div>
            <PropTable />
            <div className="flex-1 min-h-0 w-[22px] bg-[#eeeeee]" />
            <div className="h-[13px] shrink-0 flex items-center px-[2px]">
              <span className="w-0 h-0 border-y-[4px] border-y-transparent border-r-[4px] border-r-[#222]" />
              <span className="ml-[5px] h-[8px] w-[272px] rounded-[4px] bg-[#c9c9c9]" />
              <span className="ml-auto w-0 h-0 border-y-[4px] border-y-transparent border-l-[4px] border-l-[#222]" />
            </div>
          </div>
        </div>
        <div className="w-[4px]" />
        <div className="flex-1 bg-black relative">
          <div className="absolute left-[-4px] top-[552px] w-[4px] h-[100px] bg-[#50565c]" />
          <div className="absolute right-0 top-0 w-[12px] h-[222px] bg-[#54585d] flex flex-col items-end gap-[30px] pt-[20px]">
            <span className="w-[8px] h-[12px] rounded-l-[6px] border border-[#aaa]" />
            <span className="w-[8px] h-[12px] border border-[#aaa]" />
            <span className="w-[8px] h-[12px] border border-[#aaa]" />
            <span className="w-[8px] h-[12px] rounded-l-[6px] border border-[#aaa]" />
          </div>
          <svg className="absolute left-[40px] top-[1105px]" width="60" height="60" viewBox="516 1273 60 60">
            <path d="M524 1300H528V1320H524z" fill="#00ff00" />
            <path d="M526 1291l5 12h-10z" fill="#00ff00" />
            <path d="M526 1318h20v4h-20z" fill="#ff0000" />
            <path d="M556 1320l-12 5v-10z" fill="#ff0000" />
            <circle cx="526" cy="1320" r="5.500" fill="#0a0aa8" />
            <path d="M522 1279l4 5 4-5M526 1284v5" stroke="#00ff00" fill="none" />
            <path d="M559 1315l7 10M566 1315l-7 10" stroke="#ff0000" fill="none" />
          </svg>
        </div>
      </div>
      {/* status */}
      <div className="h-[30px] shrink-0 bg-[#dcdde0] border-b border-white flex items-center pl-[2px] text-[#333]">
        <span className="w-[202px]">X = -969 Y = -627</span>
        <span className="w-[84px]">层高：3</span>
        <span className="w-[133px]">标高: -0.05~2.95</span>
        <span className="w-[102px]">0</span>
        <span className="w-[81px]">隐藏：0</span>
        <StatBtn w="w-[26px]"><span className="w-[11px] h-[12px] border-l border-b border-[#333]" /></StatBtn>
        <div className="ml-[3px]">
          <StatBtn w="w-[34px]" on>
            <svg width="13" height="18" viewBox="0 0 13 18" fill="none"><rect x="0.500" y="0.500" width="12" height="17" stroke={B} /><rect x="0" y="0" width="4" height="4" fill={O} /></svg>
            <span className="ml-[5px]"><Caret /></span>
          </StatBtn>
        </div>
        <div className="ml-[4px]">
          <StatBtn w="w-[24px]"><svg width="16" height="18" viewBox="0 0 16 18"><path d="M1 1l14 16M15 1L1 17" stroke="#8d939b" /></svg></StatBtn>
        </div>
        <div className="ml-[4px]">
          <StatBtn w="w-[36px]"><svg width="16" height="16" viewBox="0 0 16 16" fill="none"><path d="M2 14h13M2 14L11 3" stroke="#333" /></svg><span className="ml-[3px]"><Caret /></span></StatBtn>
        </div>
        <div className="ml-[3px]">
          <StatBtn w="w-[36px]"><svg width="16" height="16" viewBox="0 0 16 16" fill="none"><path d="M4 1v7M1 4h7" stroke="#333" /><rect x="8" y="9" width="7" height="5" fill="#333" /></svg><span className="ml-[3px]"><Caret /></span></StatBtn>
        </div>
        <div className="ml-[3px]"><StatBtn w="w-[73px]"><span>跨图层选择</span></StatBtn></div>
        <div className="ml-[3px]"><StatBtn w="w-[61px]"><span>折线选择</span></StatBtn></div>
        <span className="ml-[3px]">按鼠标左键指定第一个角点，或拾取构件图元</span>
      </div>
      {/* taskbar */}
      <div className="flex-1 bg-gradient-to-b from-[#2a4e73] to-[#16395c] flex items-stretch pt-[1px]">
        <div className="w-[60px] pr-[6px] flex items-center justify-center">
          <div className="w-[38px] h-[38px] rounded-full bg-gradient-to-b from-[#8fc0e4] to-[#1c5a92] border border-[#9ec0d8] flex items-center justify-center">
            <svg width="22" height="22" viewBox="0 0 22 22">
              <path d="M2 4q4-2 8 0v7q-4-2-8 0z" fill="#ee5a24" />
              <path d="M11 4q4 2 9 0v7q-5 2-9 0z" fill="#6cc24a" />
              <path d="M2 12q4-2 8 0v7q-4-2-8 0z" fill="#3a9ae0" />
              <path d="M11 12q4 2 9 0v7q-5 2-9 0z" fill="#f5c518" />
            </svg>
          </div>
        </div>
        <div className="w-[158px] flex items-center pl-[9px] border border-[#6d8aa6] rounded-t-[2px] bg-gradient-to-b from-[#5c7d9c] to-[#24486d] text-white">
          <span className="w-[31px] h-[31px] bg-[#1a66c6] border-2 border-[#b4c2d0] rounded-[3px] flex items-center justify-center text-[11px] font-bold">CAD</span>
          <span className="ml-[5px] whitespace-nowrap">CAD快速看图 - C...</span>
        </div>
        <div className="ml-[4px] w-[158px] flex items-center pl-[9px] border border-[#8aa4bc] rounded-t-[2px] bg-gradient-to-b from-[#98acbe] to-[#3c5f84] text-white">
          <Logo s={31} />
          <span className="ml-[4px] whitespace-nowrap">广联达BIM土建...</span>
        </div>
        <div className="ml-[4px] w-[158px] flex items-center pl-[8px] border border-[#6d8aa6] rounded-t-[2px] bg-gradient-to-b from-[#5c7d9c] to-[#24486d] text-white">
          <svg width="32" height="26" viewBox="0 0 32 26">
            <path d="M2 15L20 6l10 4-18 10z" fill="#d0d4d8" />
            <path d="M2 15l10 5v4L2 19z" fill="#8a9096" />
            <path d="M12 20l18-10v4L12 24z" fill="#a8aeb4" />
            <path d="M15 21l3-2" stroke="#30d030" strokeWidth="2" />
          </svg>
          <span className="ml-[5px] whitespace-nowrap">文档 (E:)</span>
        </div>
      </div>

      <Dialog />

      {/* annotation overlay */}
      <div className="absolute left-[37px] top-[1209px] text-[16px] leading-[24px] text-[#ff4040] whitespace-nowrap [font-family:'Noto_Sans_CJK_SC',sans-serif]">柱子的截面箍筋指数设置不了，以前都没这问题。</div>
      <svg className="absolute inset-0 pointer-events-none" width="2268" height="1438" viewBox="0 0 2268 1438">
        <path d="M389.700 1216.500L390.300 1217.500L812 981L808 973.500Z" fill="#f04040" />
        <path d="M804 970L825 969L814 987Z" fill="#f04040" />
      </svg>
      <div className="absolute left-[1122px] top-0 w-[274px] h-[2px] bg-[#b5b5b5]" />
    </div>
  );
}
